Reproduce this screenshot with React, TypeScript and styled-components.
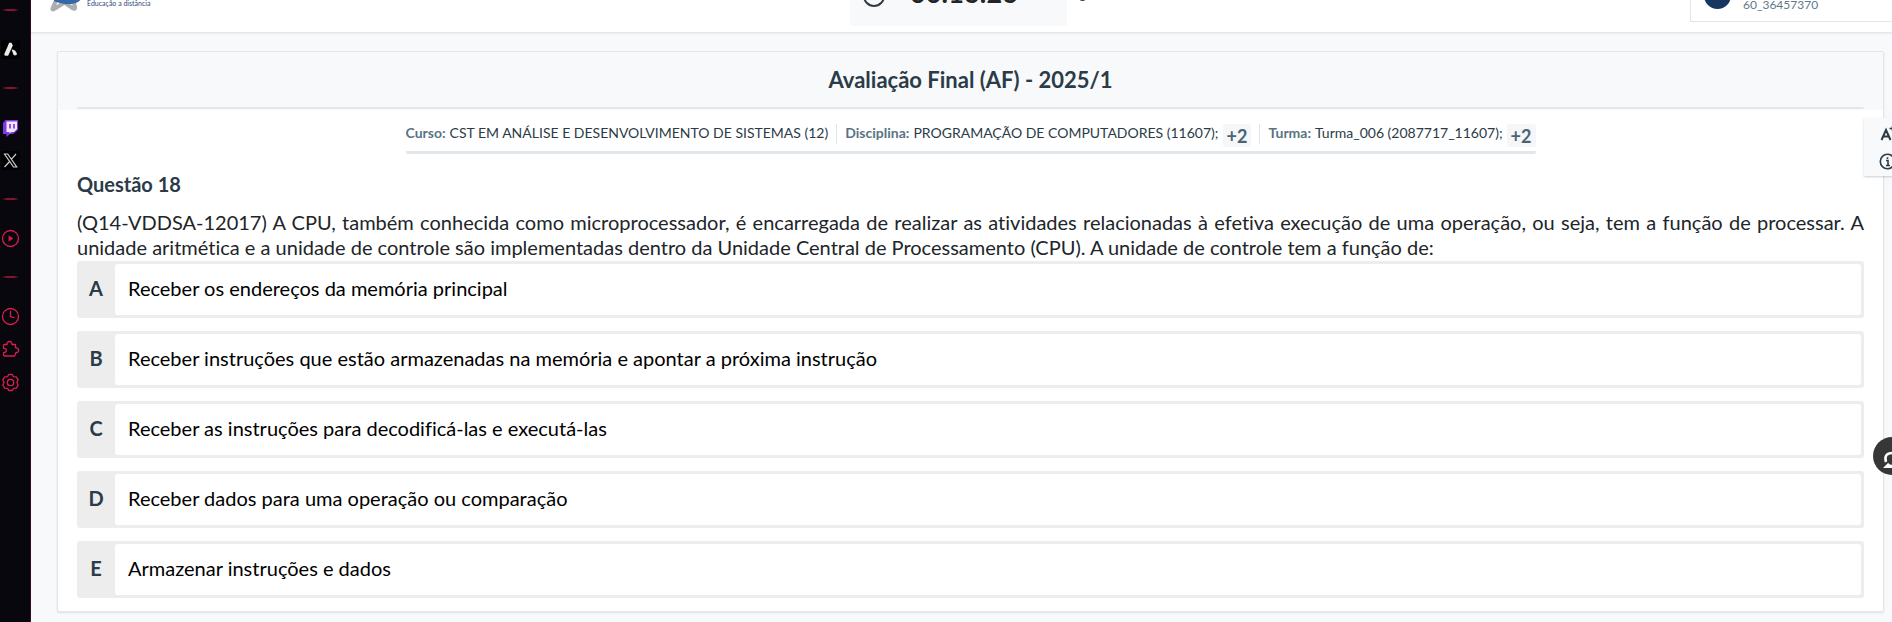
import React from "react";
import styled, { createGlobalStyle } from "styled-components";

const GlobalStyle = createGlobalStyle`
  *, *::before, *::after { box-sizing: border-box; }
  body {
    margin: 0;
    background: #f7f9fb;
    color: #2b3b47;
    font-family: Lato, "Open Sans", sans-serif;
    font-variant-ligatures: none;
    overflow-x: hidden;
  }
  h1, h2, p, dl, dd, fieldset, legend { margin: 0; padding: 0; border: 0; }
`;

const Shell = styled.div`
  display: flex;
  min-height: 100vh;
  overflow: hidden;
`;

const Sidebar = styled.nav`
  display: flex;
  flex: none;
  flex-direction: column;
  width: 31px;
  padding: 8px 0 0 1px;
  background: #07070d;
  border-right: 1px solid #3a0a1e;
`;

const SideButton = styled.button<{ $gap: number; $dark?: boolean }>`
  display: flex;
  width: 19px;
  height: 19px;
  margin-top: ${(p) => p.$gap}px;
  padding: 0;
  border: 0;
  border-radius: 3px;
  background: ${(p) => (p.$dark ? "#000" : "transparent")};
  color: #dc1e4b;

  svg { display: block; width: 19px; height: 19px; }
`;

const SideRule = styled.div<{ $gap: number }>`
  width: 17px;
  height: 2px;
  margin: ${(p) => p.$gap}px 0 0 1px;
  background: linear-gradient(90deg, transparent, #86142f 30%, #86142f 70%, transparent);
`;

const Page = styled.div`
  flex: 1;
  min-width: 0;
`;

const Header = styled.header`
  display: flex;
  align-items: flex-end;
  justify-content: space-between;
  height: 33px;
  background: #fff;
  border-bottom: 1px solid #e3e7ea;
  box-shadow: 0 1px 2px rgba(40, 60, 80, 0.06);
`;

const HeaderSide = styled.div<{ $end?: boolean }>`
  display: flex;
  flex: 1;
  align-items: flex-end;
  justify-content: ${(p) => (p.$end ? "flex-end" : "flex-start")};
`;

const Brand = styled.div`
  display: flex;
  align-items: flex-end;
  gap: 4px;
  padding: 0 0 20px 18px;
  color: #34457c;
  font-size: 7px;
  line-height: 12px;

  svg { display: block; }
  span { padding-bottom: 3px; }
`;

const TimerArea = styled.div`
  display: flex;
  align-items: flex-end;
  gap: 11px;
  padding-left: 14px;
`;

const Timer = styled.div`
  display: flex;
  align-items: flex-end;
  gap: 25px;
  width: 217px;
  height: 50px;
  margin-bottom: 6px;
  padding: 0 0 19px 13px;
  border-radius: 2px;
  background: #f7f9fb;
  color: #212529;
  font-size: 27px;
  font-weight: 700;
  line-height: 32px;

  svg { flex: none; display: block; }
  span { margin-bottom: -2px; }
`;

const TimerToggle = styled.button`
  width: 9px;
  height: 9px;
  margin-bottom: 31px;
  padding: 0;
  border: 0;
  border-radius: 50%;
  background: #2b3b47;
`;

const User = styled.div`
  display: flex;
  align-items: flex-end;
  gap: 12px;
  width: 202px;
  height: 50px;
  margin-bottom: 10px;
  padding: 0 0 8px 13px;
  border: 1px solid #dfe5e9;
  border-right: 0;
  border-radius: 2px;
  color: #5f7a8c;
  font-size: 12px;
  line-height: 16px;
`;

const Avatar = styled.span`
  width: 27px;
  height: 27px;
  margin-bottom: 4px;
  border-radius: 50%;
  background: #183760;
`;

const Card = styled.main`
  margin: 18px 8px 10px 26px;
  border: 1px solid #e3e7ea;
  border-radius: 2px;
  background: #fff;
  box-shadow: 0 1px 2px rgba(40, 60, 80, 0.12);
`;

const CardHead = styled.div`
  padding: 0 19px 1px;
  background: #f7f9fb;
`;

const Title = styled.h1`
  height: 57px;
  border-bottom: 2px solid #e1e7eb;
  border-radius: 2px;
  font-size: 22px;
  font-weight: 700;
  line-height: 56px;
  text-align: center;
`;

const Details = styled.dl`
  display: flex;
  width: fit-content;
  margin: 14px auto 0;
  padding-bottom: 7px;
  border-bottom: 3px solid #e1e7eb;
  border-radius: 2px;
  font-size: 14px;
  line-height: 18px;
`;

const Detail = styled.div`
  display: flex;
  gap: 4px;
  height: 20px;

  & + & {
    margin-left: 8px;
    padding-left: 8px;
    border-left: 1px solid #dfe5e9;
  }

  dt { color: #5a7385; font-weight: 700; }
  dd { display: flex; gap: 4px; }
`;

const More = styled.button`
  height: 23px;
  padding: 0 4px;
  border: 0;
  border-radius: 3px;
  background: #f4f6f8;
  color: #4b6375;
  font: 700 18px/20px Lato, sans-serif;
`;

const Question = styled.section`
  padding: 16px 19px 13px;
`;

const QuestionTitle = styled.h2`
  font-size: 20px;
  font-weight: 700;
  line-height: 28px;
`;

const Statement = styled.p`
  margin-top: 12px;
  color: #212529;
  font-size: 20px;
  line-height: 25px;
  text-align: justify;
`;

const Options = styled.fieldset`
  display: grid;
  gap: 13px;
  min-width: 0;
  margin-top: 1px;
`;

const Option = styled.label`
  display: flex;
  height: 57px;
  padding: 3px 3px 3px 0;
  border-radius: 3px;
  background: #ededed;
  cursor: pointer;
`;

const HiddenRadio = styled.input`
  position: absolute;
  opacity: 0;
`;

const Letter = styled.span`
  flex: none;
  width: 38px;
  font-size: 20px;
  font-weight: 700;
  line-height: 48px;
  text-align: center;
`;

const Answer = styled.span`
  flex: 1;
  padding-left: 13px;
  border-radius: 3px;
  background: #fff;
  color: #000;
  font-size: 20px;
  line-height: 48px;
`;

const Tools = styled.aside`
  position: fixed;
  top: 118px;
  right: 0;
  display: flex;
  flex-direction: column;
  gap: 4px;
  width: 28px;
  height: 58px;
  padding: 7px 0 0 15px;
  overflow: hidden;
  background: #f7f9fb;
  box-shadow: 0 1px 2px rgba(40, 60, 80, 0.25);
`;

const Tool = styled.button`
  flex: none;
  width: 24px;
  height: 24px;
  padding: 0;
  border: 0;
  background: none;
  color: #2b3b47;

  svg { display: block; }
`;

const Help = styled.button`
  position: fixed;
  top: 437px;
  right: -19px;
  width: 38px;
  height: 38px;
  padding: 0;
  border: 0;
  border-radius: 50%;
  background: #373737;

  svg { display: block; }
`;

const Stroke = ({ children }: { children: React.ReactNode }) => (
  <svg viewBox="0 0 19 19" fill="none" stroke="currentColor" strokeWidth="1.3" strokeLinejoin="round" strokeLinecap="round">
    {children}
  </svg>
);

const options = [
  ["A", "Receber os endereços da memória principal"],
  ["B", "Receber instruções que estão armazenadas na memória e apontar a próxima instrução"],
  ["C", "Receber as instruções para decodificá-las e executá-las"],
  ["D", "Receber dados para uma operação ou comparação"],
  ["E", "Armazenar instruções e dados"],
];

export default function App() {
  return (
    <>
      <GlobalStyle />
      <Shell>
        <Sidebar aria-label="Navegador">
          <SideRule $gap={1} />
          <SideButton $gap={29} $dark aria-label="Assistente">
            <svg viewBox="0 0 19 19" fill="#e9e9e9">
              <path d="M8.200 2.800h2.300l1.300 2.800-4.300 9.300c-.8 1.600-4.600 1.200-4.200-1z" />
              <path d="M10.600 9.600c2.400 0 4.600 1.200 5.400 4.500-.8 1.900-2.800 1.600-3.500.6z" />
            </svg>
          </SideButton>
          <SideRule $gap={28} />
          <SideButton $gap={30} aria-label="Twitch">
            <svg viewBox="0 0 19 19">
              <path d="M4.500 1H17v10l-5 4H9l-3.500 3v-3H2V4z" fill="#8038e0" />
              <path d="M5.500 2.500H16v7.500l-3 3h-2.500L8.500 14.500V13h-3z" fill="#eee6fb" />
              <path d="M9 5v4.500M13 5v4.500" stroke="#8038e0" strokeWidth="1.700" />
            </svg>
          </SideButton>
          <SideButton $gap={13} $dark aria-label="X">
            <svg viewBox="0 0 19 19" fill="none" stroke="#cbcbd6" strokeWidth="1.200">
              <path d="M3.500 3h3.200l9 13h-3.200zM15 3l-5 5.600M8.600 10.500L3.500 16" />
            </svg>
          </SideButton>
          <SideRule $gap={28} />
          <SideButton $gap={29} aria-label="Player">
            <Stroke>
              <circle cx="9.500" cy="9.500" r="8" />
              <path d="M8 7l4 2.500L8 12z" fill="currentColor" strokeWidth=".5" />
            </Stroke>
          </SideButton>
          <SideRule $gap={28} />
          <SideButton $gap={29} aria-label="Histórico">
            <Stroke>
              <circle cx="9.500" cy="9.500" r="8" />
              <path d="M9.500 4.500v5.200l3.300 1" />
            </Stroke>
          </SideButton>
          <SideButton $gap={14} aria-label="Extensões">
            <Stroke>
              <path d="M3 4.500h3c-.6-4 5.600-4 5 0h3.500v3.200c4.200.2 4.200 5 0 5.200v1.600l-1 1.500H3.500L2.500 15v-2.300c3.800.2 3.800-4.600 0-4.400V5z" />
            </Stroke>
          </SideButton>
          <SideButton $gap={14} aria-label="Configurações">
            <Stroke>
              <circle cx="9.500" cy="9.500" r="3.200" />
              <path d="M7.700 1.500h3.600l1.200 2.200 2.800.1 1.900 3-1.300 2.700 1.300 2.700-1.900 3-2.800.1-1.200 2.200H7.700l-1.200-2.200-2.800-.1-1.900-3 1.300-2.700-1.300-2.700 1.900-3 2.800-.1z" />
            </Stroke>
          </SideButton>
        </Sidebar>

        <Page>
          <Header>
            <HeaderSide>
              <Brand>
                <svg width="34" height="26" viewBox="0 0 34 26">
                  <path d="M10 8L3.500 22.500q0 2 2.500 0l9.500-6 8.500 6q2.500 1 2-1.500L23 8" fill="none" stroke="#adadb0" strokeWidth="4" />
                  <path d="M5 10l28-2c1 12-18 12-28 7z" fill="#3568a8" />
                </svg>
                <span>Educação a distância</span>
              </Brand>
            </HeaderSide>
            <TimerArea>
              <Timer>
                <svg width="22" height="22" viewBox="0 0 22 22" fill="none" stroke="#2b3b47" strokeWidth="2">
                  <circle cx="11" cy="11" r="10" />
                  <path d="M11 5v6h4" />
                </svg>
                <span>00:16:26</span>
              </Timer>
              <TimerToggle aria-label="Ocultar tempo" />
            </TimerArea>
            <HeaderSide $end>
              <User>
                <Avatar />
                <span>60_36457370</span>
              </User>
            </HeaderSide>
          </Header>

          <Card>
            <CardHead>
              <Title>Avaliação Final (AF) - 2025/1</Title>
            </CardHead>
            <Details>
              <Detail>
                <dt>Curso:</dt>
                <dd>CST EM ANÁLISE E DESENVOLVIMENTO DE SISTEMAS (12)</dd>
              </Detail>
              <Detail>
                <dt>Disciplina:</dt>
                <dd>PROGRAMAÇÃO DE COMPUTADORES (11607); <More>+2</More></dd>
              </Detail>
              <Detail>
                <dt>Turma:</dt>
                <dd>Turma_006 (2087717_11607); <More>+2</More></dd>
              </Detail>
            </Details>
            <Question>
              <QuestionTitle>Questão 18</QuestionTitle>
              <Statement>
                (Q14-VDDSA-12017) A CPU, também conhecida como microprocessador, é encarregada de realizar as atividades
                relacionadas à efetiva execução de uma operação, ou seja, tem a função de processar. A unidade aritmética e a
                unidade de controle são implementadas dentro da Unidade Central de Processamento (CPU). A unidade de controle
                tem a função de:
              </Statement>
              <Options aria-label="Alternativas">
                {options.map(([letter, text]) => (
                  <Option key={letter}>
                    <HiddenRadio type="radio" name="answer" value={letter} />
                    <Letter>{letter}</Letter>
                    <Answer>{text}</Answer>
                  </Option>
                ))}
              </Options>
            </Question>
          </Card>
        </Page>

        <Tools aria-label="Ferramentas">
          <Tool aria-label="Aumentar fonte">
            <svg width="24" height="24" viewBox="0 0 24 24" fill="none" stroke="currentColor" strokeWidth="2">
              <path d="M2.500 15L7 5l4.500 10M4 11.500h6" />
              <path d="M10.500 3.500h6M13.500 1v5" strokeWidth="1.600" />
            </svg>
          </Tool>
          <Tool aria-label="Informações">
            <svg width="24" height="24" viewBox="0 0 24 24" fill="none" stroke="currentColor" strokeWidth="1.600">
              <circle cx="8.500" cy="8.500" r="7.200" />
              <path d="M7 7.500h2v5M7 12.500h4M8.500 4.300v1.800" />
            </svg>
          </Tool>
        </Tools>
        <Help aria-label="Acessibilidade">
          <svg width="38" height="38" viewBox="0 0 38 38">
            <path d="M13 25c-2-6 1-9 6-9s8 3 6 9" fill="none" stroke="#fff" strokeWidth="2.500" />
            <path d="M10 31l5-5 3 2 2-1 4 4z" fill="#fff" />
          </svg>
        </Help>
      </Shell>
    </>
  );
}
